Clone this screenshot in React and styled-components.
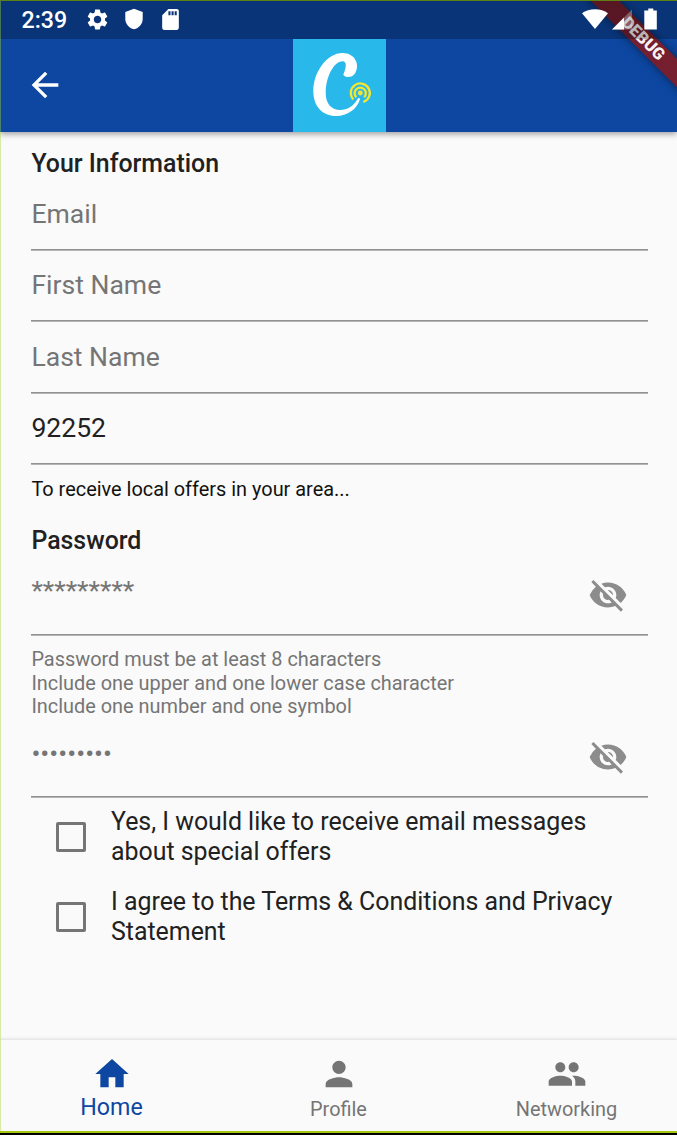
import React from "react";
import styled, { createGlobalStyle } from "styled-components";
import { MdSettings, MdSdCard, MdArrowBack, MdVisibilityOff, MdHome, MdPerson, MdPeople } from "react-icons/md";

const Global = createGlobalStyle`
  * { box-sizing: border-box; }
  body { margin: 0; background: #fafafa; font-family: Roboto, "Liberation Sans", sans-serif; }
`;

const Screen = styled.div`
  position: relative;
  width: 677px;
  height: 1135px;
  display: flex;
  flex-direction: column;
  overflow: hidden;
  background: #fafafa;
  color: #212121;
`;

const TopArea = styled.div`
  position: relative;
  flex: none;
  background: #0d47a1;
  color: #fff;
  box-shadow: 0 2px 6px rgba(0, 0, 0, 0.38);
`;

const StatusBar = styled.div`
  position: relative;
  z-index: 2;
  height: 39px;
  display: flex;
  align-items: center;
  justify-content: space-between;
  padding: 0 20px 1px 21.5px;
  background: rgba(0, 0, 0, 0.25);
`;

const StatusGroup = styled.div`
  display: flex;
  align-items: center;
  gap: ${(p) => p.$gap}px;
`;

const Clock = styled.span`
  width: 44px;
  font-size: 23.2px;
  font-weight: 500;
  line-height: 30px;
  white-space: nowrap;
  margin: 2px 4px 0 0;
`;

const AppBar = styled.header`
  height: 93px;
  display: grid;
  grid-template-columns: 293px 93px 1fr;
  align-items: center;
`;

const BackButton = styled.button`
  display: flex;
  margin: 0 0 1px 24.5px;
  padding: 0;
  border: 0;
  background: none;
  color: inherit;
`;

const Logo = styled.svg`
  display: block;
  width: 93px;
  height: 93px;
  background: #29b8ea;
`;

const Form = styled.main`
  flex: 1;
  padding: 16px 29px 0 31px;
`;

const Heading = styled.h2`
  margin: 0;
  padding-left: 0.4px;
  height: 30px;
  line-height: 31px;
  font-size: 24.9px;
  font-weight: 500;
`;

const Field = styled.div`
  height: ${(p) => p.$height}px;
  padding: ${(p) => p.$top}px 0 0 0.4px;
  display: flex;
  justify-content: space-between;
  align-items: flex-start;
  line-height: 32px;
  font-size: 26.55px;
  color: ${(p) => (p.$filled ? "#212121" : "#757575")};
  background: linear-gradient(#929292 50%, #b4b4b4 50%) bottom / 100% 2px no-repeat;
`;

const ToggleButton = styled.button`
  display: flex;
  margin: ${(p) => p.$shift}px 20px 0 0;
  padding: 0;
  border: 0;
  background: none;
  color: #8c8c8c;
`;

const Hint = styled.p`
  margin: 0;
  padding: ${(p) => p.$top}px 0 0 0.4px;
  height: ${(p) => p.$height}px;
  font-size: 19.92px;
  line-height: 23.4px;
  color: ${(p) => (p.$muted ? "#757575" : "#111")};
`;

const Options = styled.div`
  margin-top: -1px;
`;

const Option = styled.label`
  height: 80px;
  display: flex;
  align-items: center;
  gap: 25px;
  padding-left: 25px;
  font-size: 24.9px;
  line-height: 29.8px;
`;

const Box = styled.span`
  flex: none;
  width: 30px;
  height: 30px;
  border: 3px solid #757575;
  border-radius: 2px;
`;

const Nav = styled.nav`
  height: 91px;
  flex: none;
  display: grid;
  grid-template-columns: 223px 231px 1fr;
  background: #fafafa;
  box-shadow: 0 -1px 3px rgba(0, 0, 0, 0.12);
`;

const NavItem = styled.a`
  display: flex;
  flex-direction: column;
  align-items: center;
  padding-top: 14px;
  font-size: ${(p) => (p.$active ? 23.2 : 19.9)}px;
  color: ${(p) => (p.$active ? "#0d47a1" : "#757575")};

  &:last-child {
    padding-left: 2px;
  }
`;

const NavLabel = styled.span`
  line-height: ${(p) => (p.$active ? 26 : 31)}px;
`;

const Footer = styled.div`
  height: 4px;
  flex: none;
  background: linear-gradient(#a4c810 50%, #000 50%);
`;

const RibbonClip = styled.div`
  position: absolute;
  z-index: 1;
  top: 0;
  right: 0;
  width: 140px;
  height: 132px;
  overflow: hidden;
`;

const Ribbon = styled.div`
  position: absolute;
  top: 29px;
  right: -66px;
  width: 200px;
  height: 20px;
  line-height: 20px;
  transform: rotate(45deg);
  text-align: center;
  font-size: 16.6px;
  font-weight: 900;
  color: rgba(255, 255, 255, 0.95);
  background: linear-gradient(rgba(183, 28, 28, 0.63), rgba(183, 28, 28, 0.63)), rgba(0, 0, 0, 0.5);
  box-shadow: 0 0 10px rgba(0, 0, 0, 0.5);
`;

const Frame = styled.div`
  position: absolute;
  z-index: 3;
  inset: 0 0 4px 0;
  border-top: 1px solid #5c8012;
  border-left: 1px solid rgba(164, 214, 40, 0.4);
  pointer-events: none;
`;

const fields = [
  { text: "Email", height: 73, top: 20 },
  { text: "First Name", height: 71, top: 18 },
  { text: "Last Name", height: 72, top: 19 },
  { text: "92252", height: 71, top: 18, filled: true },
];

const options = [
  ["Yes, I would like to receive email messages", "about special offers"],
  ["I agree to the Terms & Conditions and Privacy", "Statement"],
];

const tabs = [
  { label: "Home", Icon: MdHome, active: true },
  { label: "Profile", Icon: MdPerson },
  { label: "Networking", Icon: MdPeople },
];

function Shield() {
  return (
    <svg width="18" height="22" viewBox="0 0 18 22" fill="currentColor">
      <path d="M9 0.700 17.700 3.900V10.700C17.700 16 14 20 9 21.300 4 20 .3 16 .3 10.700V3.900Z" />
    </svg>
  );
}

function PasswordField({ height, top, shift, children }) {
  return (
    <Field $height={height} $top={top}>
      <span>{children}</span>
      <ToggleButton $shift={shift} aria-label="Show password">
        <MdVisibilityOff size={40} />
      </ToggleButton>
    </Field>
  );
}

function App() {
  return (
    <Screen>
      <Global />
      <TopArea>
        <StatusBar>
          <StatusGroup $gap={15}>
            <Clock>2:39</Clock>
            <MdSettings size={25} />
            <Shield />
            <MdSdCard size={25} />
          </StatusGroup>
          <StatusGroup $gap={4}>
            <svg width="26" height="21" viewBox="0 0 26 21" fill="currentColor">
              <path d="M0 4.300C7-1 19-1 26 4.300L13 20Z" />
            </svg>
            <svg width="20" height="21" viewBox="0 0 20 21" fill="currentColor">
              <path d="M20 .5V20.500H0Z" opacity=".3" />
              <path d="M12 8.500V20.500H0Z" />
            </svg>
            <svg width="21" height="22" viewBox="0 0 21 22" fill="currentColor">
              <path d="M12.300 0.500h5v2h3.500v19H8.300v-19h4z" />
            </svg>
          </StatusGroup>
        </StatusBar>
        <AppBar>
          <BackButton aria-label="Back">
            <MdArrowBack size={40} />
          </BackButton>
          <Logo viewBox="0 0 93 93">
            <g fill="none" stroke="#f5e62e" strokeWidth="2.3">
              <circle cx="67.300" cy="54" r="2.400" fill="#f5e62e" stroke="none" />
              <path d="M63.300 58.200A5.600 5.600 0 1 1 71.200 58.200" />
              <path d="M60.300 60.400A9.500 9.500 0 1 1 70.300 63" />
            </g>
            <path
              fill="#fff"
              d="M50.300 35.700C52.500 39 59 39 62 34.500C67.500 25.500 62 14 49.500 14C34 14 20.300 33 20.300 52C20.300 67.500 29.500 77 43 77C54.500 77 64 70 66.900 60.500C67.200 58.800 65.500 58.300 64.700 59.800C60.500 67.500 54 71 47.500 71C38 71 32.700 64.500 32.700 53.500C32.700 38 41 22.300 49.500 22.300C54.500 22.300 53 29.500 50.300 35.700Z"
            />
          </Logo>
        </AppBar>
        <RibbonClip>
          <Ribbon>DEBUG</Ribbon>
        </RibbonClip>
      </TopArea>
      <Form>
        <Heading>Your Information</Heading>
        {fields.map((f) => (
          <Field key={f.text} $height={f.height} $top={f.top} $filled={f.filled}>
            {f.text}
          </Field>
        ))}
        <Hint $top={13} $height={60}>To receive local offers in your area...</Hint>
        <Heading>Password</Heading>
        <PasswordField height={81} top={20} shift={0}>*********</PasswordField>
        <Hint $top={12.4} $height={89} $muted>
          Password must be at least 8 characters
          <br />
          Include one upper and one lower case character
          <br />
          Include one number and one symbol
        </Hint>
        <PasswordField height={73} top={13} shift={-1}>•••••••••</PasswordField>
        <Options>
          {options.map(([a, b]) => (
            <Option key={b}>
              <Box />
              <span>
                {a}
                <br />
                {b}
              </span>
            </Option>
          ))}
        </Options>
      </Form>
      <Nav>
        {tabs.map(({ label, Icon, active }) => (
          <NavItem key={label} $active={active}>
            <Icon size={40} />
            <NavLabel $active={active}>{label}</NavLabel>
          </NavItem>
        ))}
      </Nav>
      <Footer />
      <Frame />
    </Screen>
  );
}

export default App;
